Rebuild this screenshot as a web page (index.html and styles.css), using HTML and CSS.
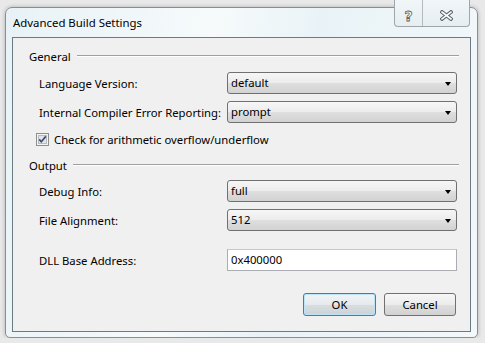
FILE: index.html
```html
<!DOCTYPE html>
<html lang="en">
<head>
    <meta charset="UTF-8">
    <title>Advanced Build Settings</title>
    <link rel="stylesheet" href="styles.css">
</head>
<body>
    <div class="window">
        <div class="titlebar">
            <span class="title">Advanced Build Settings</span>
        </div>

        <!-- Caption buttons sit over the top edge of the frame -->
        <div class="caption-buttons">
            <div class="cap help"><span>?</span></div>
            <div class="cap close">
                <svg width="13" height="11" viewBox="0 0 13 11">
                    <path d="M2 2 L11 9 M11 2 L2 9" stroke="#5a6066" stroke-width="3.6" stroke-linecap="square"/>
                    <path d="M2 2 L11 9 M11 2 L2 9" stroke="#fbfdfe" stroke-width="1.6" stroke-linecap="square"/>
                </svg>
            </div>
        </div>

        <div class="client">
            <div class="group"><span>General</span><div class="rule"></div></div>

            <div class="row first">
                <label>Language Version:</label>
                <div class="combo">default<i class="arrow"></i></div>
            </div>
            <div class="row">
                <label>Internal Compiler Error Reporting:</label>
                <div class="combo">prompt<i class="arrow"></i></div>
            </div>
            <div class="check-row">
                <span class="checkbox">
                    <svg width="13" height="13" viewBox="0 0 13 13">
                        <rect x="0.5" y="0.5" width="12" height="12" fill="#f4f4f4" stroke="#8e8f8f"/>
                        <rect x="2.5" y="2.5" width="8" height="8" fill="#e4e4e4" stroke="#b8bcc0"/>
                        <path d="M3.2 6.4 L5.3 8.8 L9.8 3.4" fill="none" stroke="#3b4d7e" stroke-width="1.7"/>
                    </svg>
                </span>
                <span>Check for arithmetic overflow/underflow</span>
            </div>

            <div class="group second"><span>Output</span><div class="rule"></div></div>

            <div class="row debug">
                <label>Debug Info:</label>
                <div class="combo">full<i class="arrow"></i></div>
            </div>
            <div class="row">
                <label>File Alignment:</label>
                <div class="combo">512<i class="arrow"></i></div>
            </div>
            <div class="row dll">
                <label>DLL Base Address:</label>
                <div class="textbox">0x400000</div>
            </div>

            <div class="buttons">
                <div class="button default">OK</div>
                <div class="button">Cancel</div>
            </div>
        </div>
    </div>
</body>
</html>
```

FILE: styles.css
```css
body {
    margin: 0;
    background-color: #e9e9e9;
    font-family: "Noto Sans", "Open Sans", sans-serif;
    font-size: 11.3px;
    color: #000;
}
.window {
    position: relative;
    margin: 7px 0 0 5px;
    width: 473px;
    height: 331px;
    box-sizing: border-box;
    border: 1px solid #878f95;
    border-radius: 7px 7px 5px 5px;
    background: linear-gradient(100deg, #e8f2f6 0%, #f6fafb 40%, #e9f3f7 60%, #f3f8fa 100%);
    box-shadow: 0 0 4px rgba(0, 0, 0, 0.25);
    display: flex;
    flex-direction: column;
}
.titlebar {
    height: 29px;
    padding-left: 7px;
    display: flex;
    align-items: center;
}
.title {
    font-size: 11.4px;
    color: #000;
}
.caption-buttons {
    position: absolute;
    top: -8px;
    right: 7px;
    display: flex;
    height: 26px;
    border: 1px solid #9ea6ab;
    border-top: none;
    border-radius: 0 0 4px 4px;
    background: linear-gradient(#f1f6f8, #e6eef1);
}
.cap {
    display: flex;
    align-items: center;
    justify-content: center;
    padding-top: 5px;
    box-sizing: border-box;
}
.help {
    width: 28px;
    border-right: 1px solid #b3bbc0;
}
.help span {
    font-family: "DejaVu Sans", sans-serif;
    font-size: 14px;
    font-weight: bold;
    color: #fbfdfe;
    -webkit-text-stroke: 0.8px #5a6066;
}
.close {
    width: 46px;
}
.client {
    flex: 1;
    margin: 0 6px 5px 6px;
    border: 1px solid #6c7a84;
    background-color: #f0f0f0;
    padding: 8px 11px 0 0;
    display: flex;
    flex-direction: column;
}
.group {
    height: 20px;
    padding-left: 16px;
    display: flex;
    align-items: center;
    gap: 6px;
}
.group .rule {
    flex: 1;
    height: 1px;
    background-color: #a0a0a0;
    border-bottom: 1px solid #fff;
}
.group.second {
    margin-top: 5px;
}
.row {
    height: 22px;
    margin-top: 7px;
    padding-left: 26px;
    display: grid;
    grid-template-columns: 188px 230px;
    align-items: center;
}
.row label {
    white-space: nowrap;
}
.row.first {
    margin-top: 6px;
}
.row.debug {
    margin-top: 5px;
}
.row.dll {
    margin-top: 18px;
}
.combo {
    position: relative;
    height: 22px;
    box-sizing: border-box;
    border: 1px solid #707070;
    border-radius: 3px;
    background: linear-gradient(#f6f6f6 0%, #ececec 50%, #dfdfdf 51%, #d2d2d2 100%);
    padding-left: 3px;
    line-height: 20px;
}
.arrow {
    position: absolute;
    right: 5px;
    top: 9px;
    width: 0;
    height: 0;
    border-left: 3.5px solid transparent;
    border-right: 3.5px solid transparent;
    border-top: 4px solid #000;
}
.textbox {
    height: 22px;
    box-sizing: border-box;
    border: 1px solid #abadb3;
    border-top-color: #c8c8c8;
    background-color: #fff;
    padding-left: 3px;
    line-height: 20px;
}
.check-row {
    height: 22px;
    margin-top: 5px;
    padding-left: 23px;
    display: flex;
    align-items: center;
    gap: 5px;
}
.checkbox {
    display: flex;
}
.buttons {
    margin-top: 22px;
    padding-right: 3px;
    display: flex;
    justify-content: flex-end;
    gap: 8px;
}
.button {
    width: 72px;
    height: 23px;
    box-sizing: border-box;
    border: 1px solid #707070;
    border-radius: 3px;
    background: linear-gradient(#f6f6f6 0%, #ececec 50%, #dfdfdf 51%, #d2d2d2 100%);
    text-align: center;
    line-height: 21px;
}
.button.default {
    width: 73px;
    border-color: #3c7fb1;
    box-shadow: inset 0 0 0 1px #bde4f6;
    background: linear-gradient(#f1f4f6 0%, #e6eaec 50%, #d8dde0 51%, #ccd3d7 100%);
}
```
